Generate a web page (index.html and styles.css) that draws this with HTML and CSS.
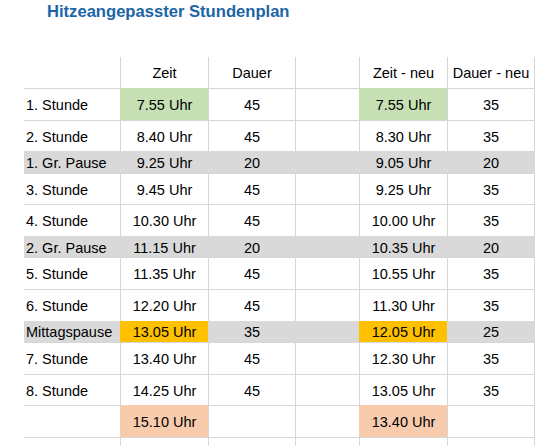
FILE: index.html
```html
<!DOCTYPE html>
<html lang="de">
<head>
    <meta charset="utf-8">
    <title>Hitzeangepasster Stundenplan</title>
    <link rel="stylesheet" href="styles.css">
</head>
<body>
    <h1 class="title">Hitzeangepasster Stundenplan</h1>

    <table class="plan">
        <thead>
            <tr>
                <th class="c-name"></th>
                <th class="c-zeit">Zeit</th>
                <th class="c-dauer">Dauer</th>
                <th class="c-gap"></th>
                <th class="c-zeit">Zeit - neu</th>
                <th class="c-dauer last">Dauer - neu</th>
            </tr>
        </thead>
        <tbody>
            <tr>
                <td>1. Stunde</td>
                <td class="green">7.55 Uhr</td>
                <td>45</td>
                <td></td>
                <td class="green">7.55 Uhr</td>
                <td class="last">35</td>
            </tr>
            <tr>
                <td>2. Stunde</td>
                <td>8.40 Uhr</td>
                <td>45</td>
                <td></td>
                <td>8.30 Uhr</td>
                <td class="last">35</td>
            </tr>
            <tr class="pause">
                <td>1. Gr. Pause</td>
                <td>9.25 Uhr</td>
                <td>20</td>
                <td></td>
                <td>9.05 Uhr</td>
                <td class="last">20</td>
            </tr>
            <tr>
                <td>3. Stunde</td>
                <td>9.45 Uhr</td>
                <td>45</td>
                <td></td>
                <td>9.25 Uhr</td>
                <td class="last">35</td>
            </tr>
            <tr>
                <td>4. Stunde</td>
                <td>10.30 Uhr</td>
                <td>45</td>
                <td></td>
                <td>10.00 Uhr</td>
                <td class="last">35</td>
            </tr>
            <tr class="pause">
                <td>2. Gr. Pause</td>
                <td>11.15 Uhr</td>
                <td>20</td>
                <td></td>
                <td>10.35 Uhr</td>
                <td class="last">20</td>
            </tr>
            <tr>
                <td>5. Stunde</td>
                <td>11.35 Uhr</td>
                <td>45</td>
                <td></td>
                <td>10.55 Uhr</td>
                <td class="last">35</td>
            </tr>
            <tr>
                <td>6. Stunde</td>
                <td>12.20 Uhr</td>
                <td>45</td>
                <td></td>
                <td>11.30 Uhr</td>
                <td class="last">35</td>
            </tr>
            <tr class="pause">
                <td>Mittagspause</td>
                <td class="orange">13.05 Uhr</td>
                <td>35</td>
                <td></td>
                <td class="orange">12.05 Uhr</td>
                <td class="last">25</td>
            </tr>
            <tr>
                <td>7. Stunde</td>
                <td>13.40 Uhr</td>
                <td>45</td>
                <td></td>
                <td>12.30 Uhr</td>
                <td class="last">35</td>
            </tr>
            <tr>
                <td>8. Stunde</td>
                <td>14.25 Uhr</td>
                <td>45</td>
                <td></td>
                <td>13.05 Uhr</td>
                <td class="last">35</td>
            </tr>
            <tr>
                <td></td>
                <td class="peach">15.10 Uhr</td>
                <td></td>
                <td></td>
                <td class="peach">13.40 Uhr</td>
                <td class="last"></td>
            </tr>
            <tr class="filler">
                <td></td>
                <td></td>
                <td></td>
                <td></td>
                <td></td>
                <td class="last"></td>
            </tr>
        </tbody>
    </table>
</body>
</html>
```

FILE: styles.css
```css
body, html {
    margin: 0;
    background: #fff;
    overflow: hidden;
}

body {
    padding: 2px 0 0 24px;
    font-family: "Liberation Sans", Arial, sans-serif;
    color: #000;
}

.title {
    margin: 0 0 35px 23px;
    font-size: 16.6px;
    line-height: 20px;
    font-weight: bold;
    color: #1b65a6;
}

.plan {
    border-collapse: separate;
    border-spacing: 0;
    table-layout: fixed;
    width: 511px;
    font-size: 14.5px;
}

.plan th,
.plan td {
    box-sizing: border-box;
    padding: 1px 0 0;
    text-align: center;
    vertical-align: middle;
    font-weight: normal;
    white-space: nowrap;
    border-left: 1px solid #d6d6d6;
}

.plan th:first-child,
.plan td:first-child {
    border-left: none;
    text-align: left;
    padding-left: 2px;
}

.plan .last {
    border-right: 1px solid #d6d6d6;
}

.plan thead tr {
    height: 31px;
}

.c-name { width: 96px; }
.c-zeit { width: 88px; }
.c-dauer { width: 87px; }
.c-gap { width: 64px; }
.c-dauer.last { width: 88px; }

.plan td {
    height: 31.7px;
    border-top: 1px solid #d6d6d6;
}

/* Pausen grau hinterlegt */
.plan .pause td {
    height: 21.3px;
    background: #d9d9d9;
    border-color: #d9d9d9;
}

.plan .filler td {
    height: 12px;
}

.plan td.green {
    background: #c6e0b4;
    border-color: #c6e0b4;
}

.plan td.orange {
    background: #ffc000;
    border-color: #ffc000;
}

.plan td.peach {
    background: #f8cbad;
    border-color: #f8cbad;
}
```
